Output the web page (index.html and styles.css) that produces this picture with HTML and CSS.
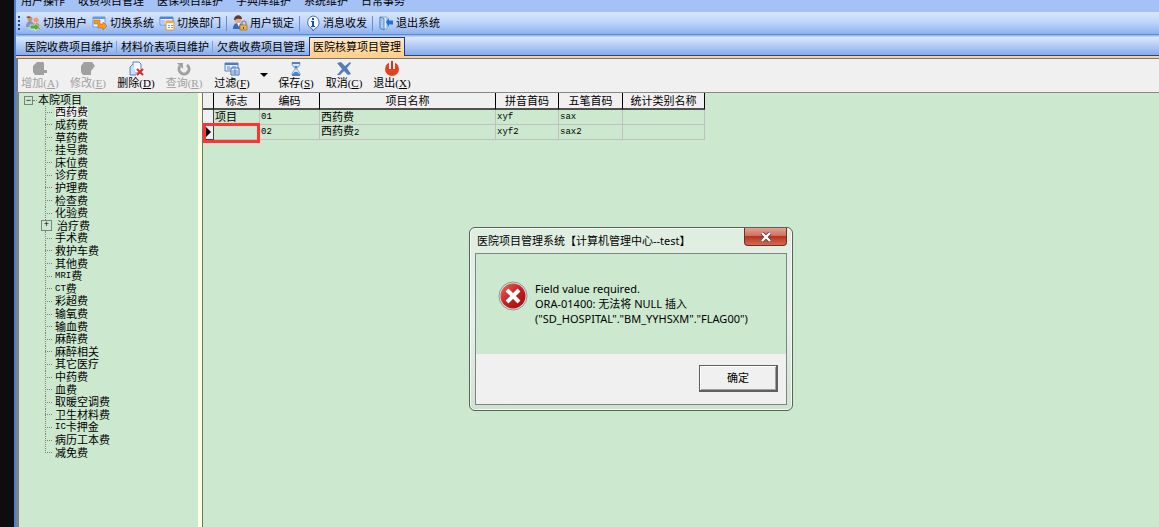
FILE: index.html
```html
<!DOCTYPE html>
<html lang="zh-CN">
<head>
  <meta charset="UTF-8">
  <meta name="viewport" content="width=device-width, initial-scale=1.0">
  <title>医院项目管理系统</title>
  <link rel="stylesheet" href="styles.css">
</head>
<body>
  <div class="app">
    <nav class="menu">
      <a href="#">用户操作</a>
      <a href="#">收费项目管理</a>
      <a href="#">医保项目维护</a>
      <a href="#">字典库维护</a>
      <a href="#">系统维护</a>
      <a href="#">日常事务</a>
    </nav>

    <div class="toolbar">
      <span class="grip"></span>
      <button>
        <svg width="16" height="16" viewBox="0 0 16 16">
          <circle cx="5" cy="4" r="2.5" fill="#d9925c"/>
          <path d="M1 2l3-1 2 2-3 0z" fill="#7a5030"/>
          <path d="M1 12c0-4 2-6 4-6s4 2 4 6z" fill="#7d98bd"/>
          <circle cx="11" cy="5" r="2.5" fill="#e8a070"/>
          <path d="M7 14c0-5 2-6 4-6s4 2 4 6z" fill="#e05a3c"/>
          <path d="M5 10h5V8l5 4-5 4v-2H5z" fill="#4fae3a" stroke="#fff" stroke-width=".6"/>
        </svg>
        切换用户
      </button>
      <button>
        <svg width="16" height="16" viewBox="0 0 16 16">
          <path d="M1 2h12v10H1z" fill="#eef5ff" stroke="#6c9bd8"/>
          <path d="M1 2h12v2H1z" fill="#5d9de6"/>
          <path d="M2 5h6v4h3V7l4 4-4 4v-2H6V9H2z" fill="#f59a23" stroke="#c46a10" stroke-width=".6"/>
        </svg>
        切换系统
      </button>
      <button>
        <svg width="16" height="16" viewBox="0 0 16 16">
          <path d="M1 2h13v8H1z" fill="#eef5ff" stroke="#5d8fd8"/>
          <path d="M1 2h13v2H1z" fill="#4b86dc"/>
          <path d="M2 6h4M2 8h4" stroke="#7ba7e0"/>
          <path d="M7 6h8v9H7z" fill="#fff8e8" stroke="#d99a3c"/>
          <path d="M7 6h8v2H7z" fill="#f0a840"/>
          <path d="M9 10h2v1H9zM12 10h2v1h-2zM9 12h2v1H9zM12 12h2v1h-2z" fill="#7a9cc8"/>
        </svg>
        切换部门
      </button>
      <span class="divider"></span>
      <button>
        <svg width="16" height="16" viewBox="0 0 16 16">
          <path d="M1 14c0-4 2-6 5-6s5 2 5 6z" fill="#3d67b5"/>
          <path d="M5 8h3l-1 4z" fill="#fff"/>
          <circle cx="6" cy="4.500" r="3.500" fill="#e9a680"/>
          <path d="M2 5c0-6 8-6 8-1-3 0-5-1-7 1z" fill="#5c3b38"/>
          <path d="M10 10V8c0-2.500 4-2.500 4 0v2" fill="none" stroke="#8a8a8a" stroke-width="1.300"/>
          <path d="M8 10h7v5H8z" fill="#efb240" stroke="#a87420" stroke-width=".8"/>
          <path d="M11 12h1v2h-1z" fill="#60401a"/>
        </svg>
        用户锁定
      </button>
      <span class="divider"></span>
      <button>
        <svg width="16" height="16" viewBox="0 0 16 16">
          <path d="M8 1a6.500 6.500 0 0 1 2 12.500L8 16l-1-2.500A6.500 6.500 0 0 1 8 1z" fill="#f4f8ff" stroke="#4771ab"/>
          <path d="M7 3h2v2H7zM6 6h3v5h1v1H6v-1h1V7H6z" fill="#1553b5"/>
        </svg>
        消息收发
      </button>
      <span class="divider"></span>
      <button>
        <svg width="16" height="16" viewBox="0 0 16 16">
          <path d="M2 2h7v12H2z" fill="#dceafb" stroke="#7ea6d8"/>
          <path d="M2 2l4 1.500V15l-4-2z" fill="#a9c9f0" stroke="#4878b8" stroke-width=".8"/>
          <path d="M8 7l3-4v2.500h4v4h-4V12z" fill="#1f74d4"/>
        </svg>
        退出系统
      </button>
    </div>

    <div class="tabs">
      <button class="tab">医院收费项目维护</button>
      <button class="tab">材料价表项目维护</button>
      <button class="tab">欠费收费项目管理</button>
      <button class="tab active">医院核算项目管理</button>
    </div>

    <div class="actions">
      <button disabled>
        <svg width="16" height="16" viewBox="0 0 16 16">
          <path d="M5 1h6l1 1v7h3v3h-3v2H3l-2-3V5z" fill="#a0a0a0"/>
        </svg>
        <span>增加<span class="key">(<u>A</u>)</span></span>
      </button>
      <button disabled>
        <svg width="16" height="16" viewBox="0 0 16 16">
          <path d="M4 1h8l3 4-4 5v4H3l-2-3V5z" fill="#a0a0a0"/>
        </svg>
        <span>修改<span class="key">(<u>E</u>)</span></span>
      </button>
      <button>
        <svg width="16" height="16" viewBox="0 0 16 16">
          <path d="M5 1h6l2 2v9H5z" fill="#f5f9ff" stroke="#5580c8"/>
          <path d="M5 3L2 6v8h6" fill="#cddff8" stroke="#5580c8"/>
          <path d="M9 8l6 6M15 8l-6 6" stroke="#dd2a2a" stroke-width="2"/>
        </svg>
        <span>删除<span class="key">(<u>D</u>)</span></span>
      </button>
      <button disabled>
        <svg width="16" height="16" viewBox="0 0 16 16">
          <path d="M4 5a5 5 0 1 0 7-1" fill="none" stroke="#a0a0a0" stroke-width="3"/>
          <path d="M1 2h6v6z" fill="#a0a0a0"/>
        </svg>
        <span>查询<span class="key">(<u>R</u>)</span></span>
      </button>
      <button>
        <svg width="16" height="16" viewBox="0 0 16 16">
          <path d="M1 2h13v8H1z" fill="#e8f1ff" stroke="#5b83c8"/>
          <path d="M1 2h13v2H1z" fill="#4a7bd0"/>
          <path d="M3 6h3M3 8h3M8 6h4" stroke="#5b83c8"/>
          <path d="M7 7h8v7H7z" fill="#f4f8ff" stroke="#4168b0"/>
          <path d="M8 10h6M8 12h6M11 8v6" stroke="#5b83c8"/>
        </svg>
        <span>过滤<span class="key">(<u>F</u>)</span></span>
      </button>
      <button class="drop" aria-label="过滤选项">
        <svg width="8" height="4" viewBox="0 0 8 4"><path d="M0 0h8L4 4z" fill="#000"/></svg>
      </button>
      <button>
        <svg width="16" height="16" viewBox="0 0 16 16">
          <path d="M4 2h8c0 4-3 4-3 6s3 2 3 6H4c0-4 3-4 3-6S4 6 4 2z" fill="#d9eafa" stroke="#7399c8"/>
          <path d="M6 5h4L8 8zM5 13c1-3 5-3 6 0z" fill="#4a80d0"/>
          <path d="M4 2h8M4 14h8" stroke="#5580c0" stroke-width="2"/>
        </svg>
        <span>保存<span class="key">(<u>S</u>)</span></span>
      </button>
      <button>
        <svg width="16" height="16" viewBox="0 0 16 16">
          <path d="M1 2l4-1 4 4 5-4 1 1-4 5 4 6-3 1-4-4-4 4-3 0 5-6z" fill="#557db8"/>
        </svg>
        <span>取消<span class="key">(<u>C</u>)</span></span>
      </button>
      <button>
        <svg width="16" height="16" viewBox="0 0 16 16">
          <circle cx="8" cy="8" r="7" fill="#e2431c"/>
          <path d="M5 0h6v8H5z" fill="#f0f0f0"/>
          <path d="M7 0h2v8H7z" fill="#d8301a"/>
        </svg>
        <span>退出<span class="key">(<u>X</u>)</span></span>
      </button>
    </div>

    <div class="main">
      <div class="tree">
        <div class="root"><span class="box">−</span><span class="dots"></span>本院项目</div>
        <ul>
          <li><span class="selected">西药费</span></li>
          <li>成药费</li>
          <li>草药费</li>
          <li>挂号费</li>
          <li>床位费</li>
          <li>诊疗费</li>
          <li>护理费</li>
          <li>检查费</li>
          <li>化验费</li>
          <li class="closed">治疗费</li>
          <li>手术费</li>
          <li>救护车费</li>
          <li>其他费</li>
          <li><span class="code">MRI</span>费</li>
          <li><span class="code">CT</span>费</li>
          <li>彩超费</li>
          <li>输氧费</li>
          <li>输血费</li>
          <li>麻醉费</li>
          <li>麻醉相关</li>
          <li>其它医疗</li>
          <li>中药费</li>
          <li>血费</li>
          <li>取暖空调费</li>
          <li>卫生材料费</li>
          <li><span class="code">IC</span>卡押金</li>
          <li>病历工本费</li>
          <li>减免费</li>
        </ul>
      </div>

      <div class="grid">
        <table>
          <colgroup>
            <col class="c-mark">
            <col class="c-flag">
            <col class="c-no">
            <col class="c-name">
            <col class="c-pinyin">
            <col class="c-wubi">
            <col class="c-type">
          </colgroup>
          <thead>
            <tr>
              <th></th>
              <th>标志</th>
              <th>编码</th>
              <th>项目名称</th>
              <th>拼音首码</th>
              <th>五笔首码</th>
              <th>统计类别名称</th>
            </tr>
          </thead>
          <tbody>
            <tr>
              <td class="mark"></td>
              <td>项目</td>
              <td class="code">01</td>
              <td>西药费</td>
              <td class="code">xyf</td>
              <td class="code">sax</td>
              <td></td>
            </tr>
            <tr>
              <td class="mark current"><span class="error-box"></span></td>
              <td></td>
              <td class="code">02</td>
              <td>西药费<span class="code">2</span></td>
              <td class="code">xyf2</td>
              <td class="code">sax2</td>
              <td></td>
            </tr>
          </tbody>
        </table>
      </div>
    </div>
  </div>

  <div class="dialog" role="alertdialog" aria-labelledby="dialogTitle">
    <div class="dialog-title">
      <span id="dialogTitle">医院项目管理系统【计算机管理中心--test】</span>
      <button class="close" aria-label="关闭">
        <svg width="12" height="10" viewBox="0 0 12 10">
          <path d="M2 1l8 8M10 1L2 9" stroke="#5b3a3a" stroke-width="4"/>
          <path d="M2 1l8 8M10 1L2 9" stroke="#fff" stroke-width="2.400"/>
        </svg>
      </button>
    </div>
    <div class="dialog-inner">
      <div class="message">
        <svg width="30" height="30" viewBox="0 0 30 30">
          <defs>
            <linearGradient id="red" x1="0" y1="0" x2="1" y2="1">
              <stop offset="0" stop-color="#e27068"/>
              <stop offset=".5" stop-color="#c81e1e"/>
              <stop offset="1" stop-color="#9c0c0c"/>
            </linearGradient>
          </defs>
          <circle cx="15" cy="15" r="14" fill="#e0e0e0" stroke="#8d9a90"/>
          <circle cx="15" cy="15" r="12.500" fill="url(#red)"/>
          <path d="M9 9l12 12M21 9L9 21" stroke="#fff" stroke-width="4"/>
        </svg>
        <p>Field value required.<br>ORA-01400: 无法将 NULL 插入<br>("SD_HOSPITAL"."BM_YYHSXM"."FLAG00")</p>
      </div>
      <div class="buttons">
        <button class="ok">确定</button>
      </div>
    </div>
  </div>
</body>
</html>
```
FILE: styles.css
```css
* {
  box-sizing: border-box;
}
body {
  margin: 0;
  padding-left: 14px;
  height: 100vh;
  overflow: hidden;
  background: #0d0d0d;
  color: #000;
  font-family: "Liberation Sans", "Noto Sans CJK SC", sans-serif;
  font-size: 11px;
  line-height: 12px;
}
button {
  padding: 0;
  border: 0;
  background: none;
  color: inherit;
  font: inherit;
  white-space: nowrap;
}
svg {
  flex: none;
}
.app {
  display: flex;
  flex-direction: column;
  height: 100%;
  border-left: 2px solid #4a7fd8;
  background: #a4c2f5;
}

/* menu and main toolbar */
.menu {
  display: flex;
  gap: 13px;
  margin-top: -5px;
  padding: 0 5px;
  height: 17px;
}
.menu a {
  color: #000;
  text-decoration: none;
}
.toolbar {
  display: flex;
  align-items: center;
  height: 23px;
  padding-left: 2px;
  border-radius: 3px 0 0 3px;
  border-bottom: 1px solid #5f8bd0;
  background: linear-gradient(#d8e6fd, #bcd3fa 50%, #8db1ee);
}
.toolbar button {
  display: flex;
  align-items: center;
  gap: 2px;
  margin-right: 5px;
}
.grip {
  width: 2px;
  height: 14px;
  margin-right: 5px;
  background: repeating-linear-gradient(#27417a 0 2px, transparent 2px 4px);
}
.divider {
  width: 1px;
  height: 15px;
  margin-right: 5px;
  background: #6a8ccb;
}

/* page tabs */
.tabs {
  display: flex;
  align-items: flex-end;
  height: 21px;
  padding-left: 5px;
  border-bottom: 1px solid #2b3f9a;
  background: linear-gradient(#86aaea, #dbe8fd 12%, #86aceb);
}
.tab {
  height: 17px;
  padding: 0 4px;
  background: linear-gradient(#7d9edb, #7d9edb) right center / 1px 12px no-repeat;
}
.tab:nth-child(3) {
  background: none;
}
.tab.active {
  height: 19px;
  margin-bottom: -1px;
  padding: 0 3px;
  border: 1px solid #20308f;
  border-bottom: 0;
  background: linear-gradient(#ffe9c8, #ffcf8c);
}

/* record buttons */
.actions {
  display: flex;
  height: 37px;
  border-top: 2px solid #ffcf8c;
  border-bottom: 1px solid #888;
  background: #f0f0f0;
  box-shadow: inset 2px 1px #777;
}
.actions button {
  display: flex;
  flex-direction: column;
  align-items: center;
  width: 48px;
  padding-top: 3px;
}
.actions button:disabled {
  color: #a0a0a0;
}
.actions .drop {
  width: 16px;
  padding-top: 15px;
}
.key {
  font-family: "Liberation Serif", serif;
}

/* item tree */
.main {
  display: flex;
  flex: 1;
  border-left: 3px solid #808080;
  background: #cce8cf;
}
.tree {
  width: 183px;
  padding: 1px 0 0 5px;
  border-right: 4px solid #ffffe1;
}
.root {
  display: flex;
  align-items: center;
}
.box,
.closed::before {
  width: 9px;
  height: 9px;
  border: 1px solid #808080;
  background: #cce8cf;
  font-size: 9px;
  line-height: 7px;
  text-align: center;
}
.dots {
  width: 4px;
  margin-right: 1px;
  border-top: 1px dotted #808080;
}
.tree ul {
  display: grid;
  grid-auto-rows: 1fr;
  height: 353px;
  margin: 0 0 0 20px;
  padding: 0;
  list-style: none;
}
.tree li {
  display: flex;
  align-items: center;
  min-height: 0;
  padding-left: 11px;
  background:
    repeating-linear-gradient(#808080 0 1px, transparent 1px 2px) 1px 0 / 1px 100% no-repeat,
    repeating-linear-gradient(90deg, #808080 0 1px, transparent 1px 2px) 1px 50% / 8px 1px no-repeat;
}
.tree li:last-child {
  background-size: 1px 50%, 8px 1px;
}
.tree .closed {
  padding-left: 0;
}
.closed::before {
  content: "+";
  margin: 0 5px 0 -3px;
}
.selected {
  background: #f0f0f0;
}
.code {
  font-family: "Liberation Mono", monospace;
  font-size: 9px;
}

/* item table */
.grid {
  flex: 1;
  border-left: 1px solid #707070;
}
table {
  width: 502px;
  table-layout: fixed;
  border-collapse: separate;
  border-spacing: 0;
}
.c-mark { width: 11px; }
.c-flag { width: 46px; }
.c-no { width: 60px; }
.c-name { width: 176px; }
.c-pinyin { width: 63px; }
.c-wubi { width: 64px; }
.c-type { width: 82px; }
th {
  height: 17px;
  padding: 0;
  border-right: 1px solid #000;
  border-bottom: 2px solid #505050;
  background: #f0f0f0;
  font-weight: normal;
}
td {
  height: 15px;
  padding: 0 1px;
  border-right: 1px solid #c0c0c0;
  border-bottom: 1px solid #c0c0c0;
}
.mark {
  position: relative;
  border-color: #404040;
  background: #f0f0f0;
}
.current::before {
  content: "";
  display: block;
  width: 0;
  margin-left: 2px;
  border: 5px solid transparent;
  border-left-color: #000;
  border-right: 0;
}
.error-box {
  position: absolute;
  top: -2px;
  left: 0;
  width: 57px;
  height: 20px;
  border: 3px solid #f33;
}

/* error message */
.dialog {
  position: absolute;
  top: 227px;
  left: 469px;
  width: 324px;
  padding: 0 5px 5px;
  border: 1px solid #59635c;
  border-radius: 6px;
  background: linear-gradient(#dfeee1, #e8f0e9 50%, #cfe2d1);
  box-shadow: inset 0 0 0 1px #f4faf5;
}
.dialog-title {
  display: flex;
  justify-content: space-between;
  height: 25px;
  padding-left: 2px;
  font-family: "Noto Sans", "Noto Sans CJK SC", sans-serif;
}
.dialog-title span {
  line-height: 25px;
}
.close {
  display: flex;
  align-items: center;
  justify-content: center;
  width: 43px;
  height: 18px;
  border: 1px solid #6b302a;
  border-top: 0;
  border-radius: 0 0 4px 4px;
  background: linear-gradient(#e5a094, #d0705f 45%, #b83420 50%, #d26a50);
}
.dialog-inner {
  border: 1px solid #7c867e;
  background: #f0f0f0;
}
.message {
  display: flex;
  gap: 7px;
  height: 100px;
  padding: 27px 22px;
  background: #cce8cf;
}
.message p {
  margin: 0;
  font-family: "Noto Sans", "Noto Sans CJK SC", sans-serif;
  line-height: 15px;
  white-space: nowrap;
}
.buttons {
  display: flex;
  justify-content: flex-end;
  padding: 11px 8px 12px;
}
.ok {
  width: 79px;
  height: 27px;
  border: 1px solid #606060;
  border-right-width: 2px;
  border-bottom-width: 2px;
  background: #f0f0f0;
  box-shadow: inset 1px 1px #fff, inset -1px -1px #a0a0a0;
}
```
